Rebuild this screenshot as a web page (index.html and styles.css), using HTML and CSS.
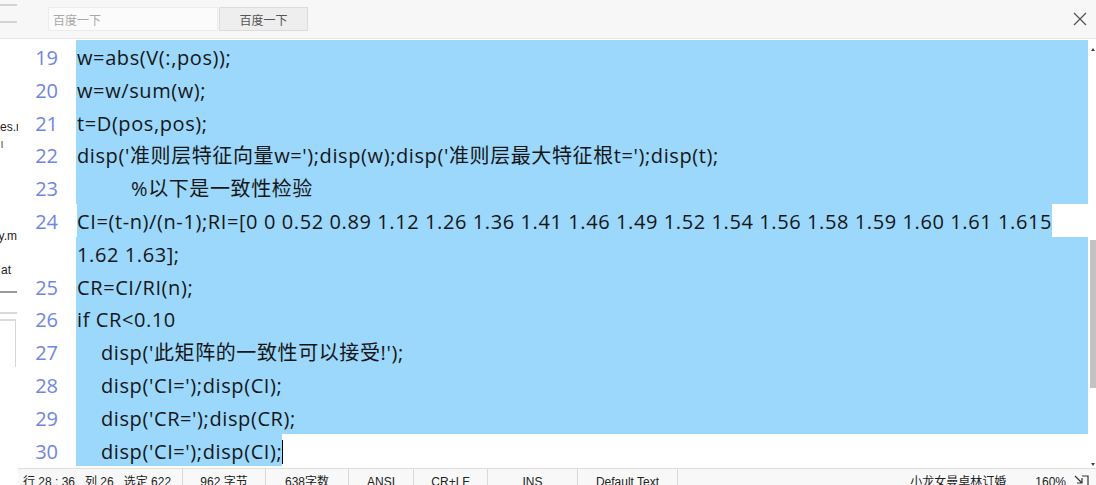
FILE: index.html
```html
<!DOCTYPE html>
<html lang="zh-CN">
<head>
    <meta charset="UTF-8">
    <title>editor</title>
    <link rel="stylesheet" href="styles.css">
</head>
<body>

<header class="topbar">
    <div class="topbar-edge">
        <span class="edge-line"></span>
        <span class="edge-line"></span>
    </div>
    <input class="search-input" type="text" placeholder="百度一下">
    <button class="search-button">百度一下</button>
    <div class="spacer"></div>
    <div class="close-btn">
        <svg width="14" height="14" viewBox="0 0 14 14">
            <path d="M1 1 L13 13 M13 1 L1 13" stroke="#555" stroke-width="1.3" fill="none"/>
        </svg>
    </div>
</header>

<main class="workspace">
    <!-- ventana de atrás, recortada -->
    <aside class="side">
        <div class="side-text t1">es.r</div>
        <div class="side-text t2">l</div>
        <div class="side-text t3">y.m</div>
        <div class="side-text t4">at</div>
        <div class="side-rule dark"></div>
        <div class="side-rule"></div>
        <div class="side-box"></div>
    </aside>

    <section class="editor">
        <div class="lines">
            <div class="row sel"><span class="num">19</span><span class="code">w=abs(V(:,pos));</span></div>
            <div class="row sel"><span class="num">20</span><span class="code">w=w/sum(w);</span></div>
            <div class="row sel"><span class="num">21</span><span class="code">t=D(pos,pos);</span></div>
            <div class="row sel"><span class="num">22</span><span class="code">disp('准则层特征向量w=');disp(w);disp('准则层最大特征根t=');disp(t);</span></div>
            <div class="row sel"><span class="num">23</span><span class="code tab">%以下是一致性检验</span></div>
            <div class="row part"><span class="num">24</span><span class="code"><span class="hl">CI=(t-n)/(n-1);RI=[0 0 0.52 0.89 1.12 1.26 1.36 1.41 1.46 1.49 1.52 1.54 1.56 1.58 1.59 1.60 1.61 1.615 </span></span></div>
            <div class="row sel"><span class="num"></span><span class="code">1.62 1.63];</span></div>
            <div class="row sel"><span class="num">25</span><span class="code">CR=CI/RI(n);</span></div>
            <div class="row sel"><span class="num">26</span><span class="code">if CR&lt;0.10</span></div>
            <div class="row sel"><span class="num">27</span><span class="code indent">disp('此矩阵的一致性可以接受!');</span></div>
            <div class="row sel"><span class="num">28</span><span class="code indent">disp('CI=');disp(CI);</span></div>
            <div class="row sel"><span class="num">29</span><span class="code indent">disp('CR=');disp(CR);</span></div>
            <div class="row part"><span class="num">30</span><span class="code indent"><span class="hl">disp('CI=');disp(CI);</span><span class="caret"></span></span></div>
        </div>
        <div class="scrollbar">
            <span class="arrow up"></span>
            <div class="thumb"></div>
            <span class="arrow down"></span>
        </div>
    </section>
</main>

<footer class="statusbar">
    <span class="cell first">行 28 : 36&nbsp;&nbsp;&nbsp;列 26&nbsp;&nbsp;&nbsp;选定 622</span>
    <span class="cell w83">962 字节</span>
    <span class="cell w83">638字数</span>
    <span class="cell w65">ANSI</span>
    <span class="cell w74">CR+LF</span>
    <span class="cell w90">INS</span>
    <span class="cell w100">Default Text</span>
    <span class="cell grow"></span>
    <span class="cell plain">小龙女曼卓林订婚</span>
    <span class="cell plain pct">160%</span>
    <span class="cell plain grip">
        <svg width="16" height="12" viewBox="0 0 16 12">
            <path d="M1 1 L8 8 M8 3 L8 8 L3 8" stroke="#333" stroke-width="1.2" fill="none"/>
            <path d="M8 1 L14 1 L14 11 L4 11" stroke="#333" stroke-width="1.2" fill="none"/>
        </svg>
    </span>
</footer>

</body>
</html>
```

FILE: styles.css
```css
body {
    margin: 0;
    padding: 0;
    width: 1096px;
    height: 485px;
    overflow: hidden;
    background-color: #fff;
    font-family: "Open Sans", "Noto Sans CJK SC", sans-serif;
    display: flex;
    flex-direction: column;
}

.topbar {
    height: 38px;
    flex-shrink: 0;
    display: flex;
    align-items: center;
    background-color: #f7f7f7;
    border-bottom: 1px solid #e6e6e6;
    font-family: "Noto Sans CJK SC", sans-serif;
}

.topbar-edge {
    width: 18px;
    align-self: stretch;
    display: flex;
    flex-direction: column;
    gap: 15px;
    padding-top: 4px;
    box-sizing: border-box;
}

.edge-line {
    display: block;
    width: 17px;
    height: 2px;
    background-color: #d4d4d4;
}

.search-input {
    margin-left: 30px;
    width: 170px;
    height: 24px;
    box-sizing: border-box;
    border: 1px solid #ececec;
    background-color: #fbfbfb;
    font-family: inherit;
    font-size: 12px;
    padding: 0 4px;
    outline: none;
}

.search-input::placeholder {
    color: #a8a8a8;
}

.search-button {
    margin-left: 1px;
    width: 89px;
    height: 24px;
    box-sizing: border-box;
    border: 1px solid #dcdcdc;
    background-color: #eeeeee;
    color: #555;
    font-family: inherit;
    font-size: 12px;
    padding: 0;
}

.spacer {
    flex: 1;
}

.close-btn {
    width: 14px;
    height: 14px;
    margin-right: 9px;
    display: flex;
}

.workspace {
    flex: 1;
    display: flex;
    min-height: 0;
}

.side {
    width: 18px;
    flex-shrink: 0;
    position: relative;
    overflow: hidden;
    background-color: #fff;
}

.side-text {
    position: absolute;
    right: 1px;
    font-family: "Liberation Sans", sans-serif;
    font-size: 12px;
    color: #222;
    white-space: nowrap;
}

.side-text.t1 { top: 81px; right: -2px; }
.side-text.t2 { top: 101px; right: 15px; font-size: 9px; }
.side-text.t3 { top: 190px; right: 1px; }
.side-text.t4 { top: 224px; right: 7px; }

.side-rule {
    position: absolute;
    left: 0;
    width: 17px;
    top: 273px;
    height: 2px;
    background-color: #d8d8d8;
}

.side-rule.dark {
    top: 252px;
    background-color: #9a9a9a;
}

.side-box {
    position: absolute;
    left: 0;
    top: 280px;
    width: 15px;
    height: 46px;
    border-top: 2px solid #dcdcdc;
    border-right: 1px solid #d6d6d6;
}

.editor {
    flex: 1;
    display: flex;
    min-width: 0;
    background-color: #fff;
}

.lines {
    flex: 1;
    display: flex;
    flex-direction: column;
    padding-top: 1px;
    min-width: 0;
    overflow: hidden;
}

.row {
    display: flex;
    flex-shrink: 0;
    height: 32.8px;
    line-height: 35.5px;
    font-size: 20px;
    color: #161616;
    white-space: nowrap;
    overflow: hidden;
}

.num {
    width: 58px;
    flex-shrink: 0;
    box-sizing: border-box;
    padding-right: 18px;
    text-align: right;
    color: #7086df;
}

.code {
    flex: 1;
    padding-left: 1px;
    overflow: hidden;
    letter-spacing: 0.6px;
}

.row.sel .code {
    background-color: #9bd8fc;
}

.code.tab {
    padding-left: 55px;
}

.code.indent {
    padding-left: 25px;
}

.hl {
    display: inline-block;
    height: 32.8px;
    background-color: #9bd8fc;
    vertical-align: top;
}

.row.part .code.indent {
    padding-left: 0;
}

.row.part .code.indent .hl {
    padding-left: 25px;
}

.caret {
    display: inline-block;
    width: 1px;
    height: 24px;
    margin-top: 6px;
    background-color: #000;
    vertical-align: top;
}

.scrollbar {
    width: 8px;
    flex-shrink: 0;
    position: relative;
    background-color: #fff;
}

.thumb {
    position: absolute;
    left: 2px;
    right: 0;
    top: 201px;
    height: 148px;
    background-color: #c3c3c3;
}

.arrow {
    position: absolute;
    left: 3px;
    width: 0;
    height: 0;
    border-left: 2px solid transparent;
    border-right: 2px solid transparent;
}

.arrow.up {
    top: 9px;
    border-bottom: 3px solid #444;
}

.arrow.down {
    bottom: 2px;
    border-top: 3px solid #444;
}

.statusbar {
    height: 16px;
    flex-shrink: 0;
    display: flex;
    align-items: flex-start;
    border-top: 1px solid #dedede;
    background-color: #f8f8f8;
    font-family: "Liberation Sans", "Noto Sans CJK SC", sans-serif;
    font-size: 12px;
    color: #222;
    line-height: 16px;
    margin-left: 18px;
    overflow: hidden;
}

.cell {
    display: block;
    height: 16px;
    padding-top: 5px;
    border-right: 1px solid #d8d8d8;
    text-align: center;
    white-space: nowrap;
    box-sizing: content-box;
    flex-shrink: 0;
}

.cell.first {
    width: 159px;
    text-align: left;
    padding-left: 5px;
}

.cell.w83 { width: 82px; }
.cell.w65 { width: 64px; }
.cell.w74 { width: 73px; }
.cell.w90 { width: 89px; }
.cell.w100 { width: 99px; }

.cell.grow {
    flex: 1;
    border-right: none;
}

.cell.plain {
    border-right: none;
}

.cell.pct {
    margin-left: 29px;
}

.cell.grip {
    margin-left: 8px;
    margin-right: 6px;
    padding-top: 6px;
}
```
